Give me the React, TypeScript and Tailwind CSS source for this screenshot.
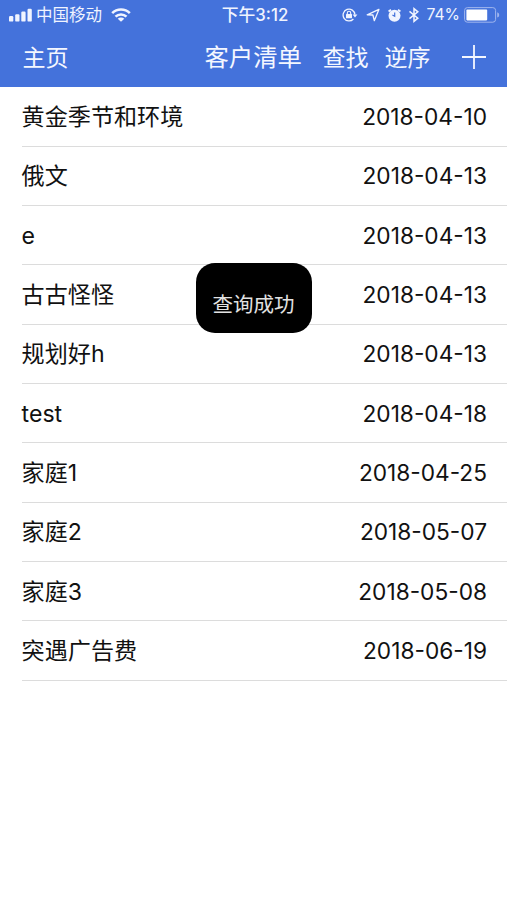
import type { ReactNode } from 'react'

type Customer = {
  name: string
  date: string
}

const customers: Customer[] = [
  { name: '黄金季节和环境', date: '2018-04-10' },
  { name: '俄文', date: '2018-04-13' },
  { name: 'e', date: '2018-04-13' },
  { name: '古古怪怪', date: '2018-04-13' },
  { name: '规划好h', date: '2018-04-13' },
  { name: 'test', date: '2018-04-18' },
  { name: '家庭1', date: '2018-04-25' },
  { name: '家庭2', date: '2018-05-07' },
  { name: '家庭3', date: '2018-05-08' },
  { name: '突遇广告费', date: '2018-06-19' },
]

function SignalIcon() {
  return (
    <svg width="24" height="14" viewBox="0 0 24 14" fill="currentColor">
      <rect x="0" y="8" width="4.3" height="5.6" rx="1.2" />
      <rect x="6.2" y="6.2" width="4.3" height="7.4" rx="1.2" />
      <rect x="12.3" y="3.6" width="4.3" height="10" rx="1.2" />
      <rect x="18.5" y="0.7" width="4.3" height="12.9" rx="1.2" />
    </svg>
  )
}

function WifiIcon() {
  return (
    <svg width="20" height="14" viewBox="0 0 20 14" fill="none" stroke="currentColor" strokeWidth="2.6">
      <path d="M1.2 5.2a12.4 12.4 0 0 1 17.6 0" />
      <path d="M4.5 8.7a7.8 7.8 0 0 1 11 0" />
      <path d="M10 13.8 6.7 10.8a4.6 4.6 0 0 1 6.6 0Z" fill="currentColor" stroke="none" />
    </svg>
  )
}

function RotationLockIcon() {
  return (
    <svg width="16" height="14" viewBox="0 0 16 14" fill="none" stroke="currentColor" strokeWidth="1.3">
      <path d="M11.4 11A5.9 5.9 0 1 1 12.9 6.6" />
      <path d="M10.6 6.4h4.8L13 9.4Z" fill="currentColor" stroke="none" />
      <rect x="4" y="6" width="6" height="4.3" rx="0.5" fill="currentColor" stroke="none" />
      <path d="M5.3 6.4V5a1.7 1.7 0 0 1 3.4 0v1.4" strokeWidth="1.1" />
    </svg>
  )
}

function LocationIcon() {
  return (
    <svg width="14" height="14" viewBox="0 0 14 14" fill="none" stroke="currentColor" strokeWidth="1.3" strokeLinejoin="round">
      <path d="M12.9 1.4 1.2 6.8l5.7.2 1.4 5.7Z" />
    </svg>
  )
}

function AlarmIcon() {
  return (
    <svg width="15" height="15" viewBox="0 0 15 15" fill="none" stroke="currentColor">
      <circle cx="7.5" cy="7.8" r="6" fill="currentColor" stroke="none" />
      <path d="M1.6 3.6 4 1.7M13.4 3.6 11 1.7" strokeWidth="1.9" />
      <path d="M7.7 4.4v3.9L5.4 7" stroke="#4472db" strokeWidth="1.2" />
    </svg>
  )
}

function BluetoothIcon() {
  return (
    <svg width="12" height="16" viewBox="0 0 12 16" fill="none" stroke="currentColor" strokeWidth="1.5">
      <path d="m1.5 4.4 8.3 6.8L6 14.3V1.7l3.8 3.1-8.3 6.8" />
    </svg>
  )
}

function BatteryIcon() {
  return (
    <svg width="37" height="16" viewBox="0 0 37 16" fill="none">
      <rect x="0.6" y="0.6" width="31" height="14.6" rx="2.8" stroke="#a0b6ee" strokeWidth="1" />
      <rect x="2.4" y="2.6" width="20.8" height="10.8" rx="0.8" fill="#fff" />
      <path d="M33.2 5.2a2.8 2.8 0 0 1 0 5.4Z" fill="#a0b6ee" />
    </svg>
  )
}

function PlusIcon() {
  return (
    <svg width="26" height="26" viewBox="0 0 26 26" fill="none" stroke="currentColor" strokeWidth="1.8">
      <path d="M13 1v24M1 13h24" />
    </svg>
  )
}

function StatusBar() {
  return (
    <div className="grid h-[30px] grid-cols-[1fr_auto_1fr] items-center pl-[9px] pr-[6px] text-[#f0f4ff]">
      <div className="flex items-center">
        <SignalIcon />
        <span className="ml-[3px] text-[16.5px] leading-none">中国移动</span>
        <span className="ml-[9px]">
          <WifiIcon />
        </span>
      </div>
      <div className="text-[16.8px] font-medium leading-none">下午3:12</div>
      <div className="flex items-center justify-end">
        <RotationLockIcon />
        <span className="ml-[8px]">
          <LocationIcon />
        </span>
        <span className="ml-[7px]">
          <AlarmIcon />
        </span>
        <span className="ml-[6px]">
          <BluetoothIcon />
        </span>
        <span className="ml-[6px] text-[15.7px] leading-none">74%</span>
        <span className="ml-[4px]">
          <BatteryIcon />
        </span>
      </div>
    </div>
  )
}

function NavButton({ children, className }: { children: ReactNode; className?: string }) {
  return (
    <button type="button" className={className}>
      {children}
    </button>
  )
}

function NavBar() {
  return (
    <nav className="flex h-[57px] items-center pb-[2px] pl-[22.5px] pr-[20.5px] text-[23px] leading-none text-[#f4f7ff]">
      <NavButton className="pt-[2px]">主页</NavButton>
      <h1 className="ml-auto text-[24.4px]">客户清单</h1>
      <NavButton className="ml-[20.5px] pt-[2px]">查找</NavButton>
      <NavButton className="ml-[16px] pt-[2px]">逆序</NavButton>
      <NavButton className="ml-[30px] pb-[2px]">
        <PlusIcon />
      </NavButton>
    </nav>
  )
}

function CustomerRow({ name, date }: Customer) {
  return (
    <li className="ml-[22px] flex h-[59.33px] items-center justify-between border-b border-[#dcdcdc] pr-[20px] pt-[2px] leading-none">
      <span className="-ml-[0.4px] text-[23.1px]">{name}</span>
      <span className="text-[22.7px]">{date}</span>
    </li>
  )
}

export default function App() {
  return (
    <div className="relative h-[900px] w-[507px] overflow-hidden bg-white font-['Inter','Noto_Sans_CJK_SC',sans-serif] text-[#111]">
      <header className="bg-[#4472db]">
        <StatusBar />
        <NavBar />
      </header>

      <ul className="pt-[0.3px]">
        {customers.map((customer) => (
          <CustomerRow key={customer.name} {...customer} />
        ))}
      </ul>

      {/* Toast */}
      <div className="absolute left-[196px] top-[263px] flex h-[70px] w-[116px] items-center justify-center rounded-[19px] bg-black pt-[14px] pr-px text-[20.5px] leading-none text-[#e2e2e2]">
        查询成功
      </div>
    </div>
  )
}
